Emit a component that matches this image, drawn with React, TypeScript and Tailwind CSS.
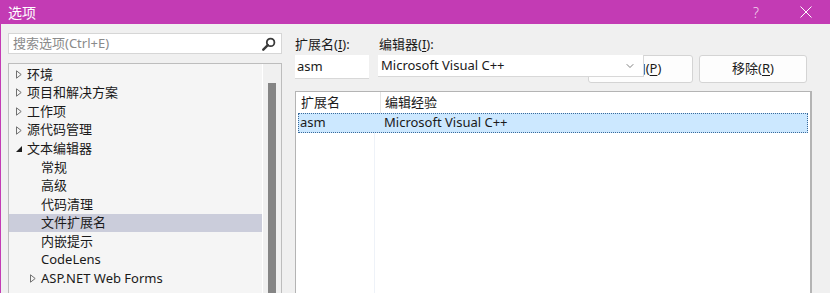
import { ChevronDown } from 'lucide-react'

const font = { fontFamily: '"Noto Sans", "Noto Sans CJK SC", sans-serif' }

type Node = { label: string; level: 0 | 1; state?: 'closed' | 'open'; selected?: boolean }

const nodes: Node[] = [
  { label: '环境', level: 0, state: 'closed' },
  { label: '项目和解决方案', level: 0, state: 'closed' },
  { label: '工作项', level: 0, state: 'closed' },
  { label: '源代码管理', level: 0, state: 'closed' },
  { label: '文本编辑器', level: 0, state: 'open' },
  { label: '常规', level: 1 },
  { label: '高级', level: 1 },
  { label: '代码清理', level: 1 },
  { label: '文件扩展名', level: 1, selected: true },
  { label: '内嵌提示', level: 1 },
  { label: 'CodeLens', level: 1 },
  { label: 'ASP.NET Web Forms', level: 1, state: 'closed' },
]

function Arrow({ state }: { state?: 'closed' | 'open' }) {
  if (state === 'closed')
    return (
      <svg width="6" height="9" viewBox="0 0 6 9" className="shrink-0">
        <path d="M0.5 0.8 L5.2 4.5 L0.5 8.2 Z" fill="none" stroke="#707070" strokeWidth="1" />
      </svg>
    )
  if (state === 'open')
    return (
      <svg width="6" height="9" viewBox="0 0 6 9" className="shrink-0">
        <path d="M6 2 L6 8 L0 8 Z" fill="#1e1e1e" />
      </svg>
    )
  return <span className="w-[6px] shrink-0" />
}

function TreeRow({ n }: { n: Node }) {
  return (
    <div
      className={`flex h-[18.6px] shrink-0 items-center text-[13px] text-[#1a1a1a] ${n.selected ? 'bg-[#cbcddb]' : ''} ${n.level === 0 ? 'pl-[7px]' : 'pl-[21px]'}`}
    >
      <Arrow state={n.state} />
      <span className="ml-[5px] whitespace-nowrap">{n.label}</span>
    </div>
  )
}

function Btn({ label, k, className = '' }: { label: string; k: string; className?: string }) {
  return (
    <button className={`flex h-[28px] items-center justify-center rounded-[3px] border border-[#d4d4d4] bg-[#fdfdfd] text-[13px] text-[#1a1a1a] ${className}`}>
      {label}(<span className="underline underline-offset-2">{k}</span>)
    </button>
  )
}

export default function App() {
  return (
    <div style={font} className="flex h-[293px] w-[830px] flex-col overflow-hidden border-l border-[#c33bb4] bg-[#f0f0f0]">
      {/* title bar */}
      <div className="flex h-[24px] shrink-0 items-center bg-[#c33bb4] pl-[7px] text-white">
        <span className="text-[14px]">选项</span>
        <span className="ml-auto mr-[41px] text-[14px] font-light text-[#f3d6ef]">?</span>
        <svg width="12" height="12" viewBox="0 0 12 12" className="mr-[18px]">
          <path d="M0.5 0.5 L11.5 11.5 M11.5 0.5 L0.5 11.5" stroke="#fff" strokeWidth="1" />
        </svg>
      </div>

      <div className="flex min-h-0 flex-1">
        {/* left */}
        <div className="flex w-[281px] shrink-0 flex-col pl-[7px] pt-[9px]">
          <div className="flex h-[21px] w-[274px] items-center border border-[#d6d6d6] bg-white pl-[4px] pr-[5px]">
            <span className="text-[13px] text-[#8a8a8a]">搜索选项(Ctrl+E)</span>
            <svg width="14" height="14" viewBox="0 0 14 14" className="ml-auto">
              <circle cx="8.6" cy="5.4" r="3.8" fill="none" stroke="#3a3a3a" strokeWidth="1.8" />
              <path d="M5.8 8.2 L1.3 12.7" stroke="#3a3a3a" strokeWidth="2.4" strokeLinecap="round" />
            </svg>
          </div>
          <div className="mt-[9px] flex min-h-0 w-[274px] flex-1 border-l border-t border-r border-[#bdbdbd] bg-[#f5f5f5]">
            <div className="flex min-w-0 flex-1 flex-col overflow-hidden pt-[1px]">
              {nodes.map(n => (
                <TreeRow key={n.label} n={n} />
              ))}
            </div>
            <div className="flex w-[19px] shrink-0 justify-center border-l border-white bg-[#f0f0f0] pt-[19px]">
              <div className="h-[260px] w-[8px] bg-[#858585]" />
            </div>
          </div>
        </div>

        {/* right */}
        <div className="flex min-w-0 flex-1 flex-col pl-[13px] pt-[10px]">
          <div className="flex h-[21px] items-center text-[13px] text-[#1a1a1a]">
            <span className="w-[84px]">
              扩展名(<span className="underline underline-offset-2">I</span>):
            </span>
            <span>
              编辑器(<span className="underline underline-offset-2">I</span>):
            </span>
          </div>
          <div className="flex items-start">
            <div className="flex h-[24px] w-[74px] items-center border-b border-[#d8d8d8] bg-white pl-[2px] text-[13px] text-[#1a1a1a]">
              asm
            </div>
            <div className="relative z-10 ml-[9px] flex h-[22px] w-[266px] items-center border-b border-r border-[#d8d8d8] bg-white pl-[3px] pr-[7px] text-[13px] text-[#1a1a1a]">
              Microsoft Visual C++
              <ChevronDown className="ml-auto h-[12px] w-[12px] text-[#555]" strokeWidth={1.5} />
            </div>
            <Btn label="添加" k="P" className="ml-[-56px] w-[105px]" />
            <Btn label="移除" k="R" className="ml-[6px] w-[108px]" />
          </div>

          <div className="mt-[8px] flex min-h-0 w-[517px] flex-1 flex-col border-l border-t border-r-2 border-[#b4b4b4] bg-white">
            <div className="flex h-[21px] shrink-0 items-center text-[13px] text-[#1a1a1a]">
              <span className="w-[84px] pl-[5px]">扩展名</span>
              <span className="h-full border-l border-[#e5e5e5]" />
              <span className="pl-[4px]">编辑经验</span>
            </div>
            <div className="flex min-h-0 flex-1 flex-col px-[2px]">
              <div className="flex h-[20px] shrink-0 items-center border border-dotted border-[#3b6a9a] bg-[#cce8ff] text-[13px] text-[#1a1a1a]">
                <span className="w-[85px] pl-[1px]">asm</span>
                <span>Microsoft Visual C++</span>
              </div>
              <div className="flex min-h-0 flex-1">
                <div className="w-[77px] border-r border-[#eef2f8]" />
              </div>
            </div>
          </div>
        </div>
      </div>
    </div>
  )
}
